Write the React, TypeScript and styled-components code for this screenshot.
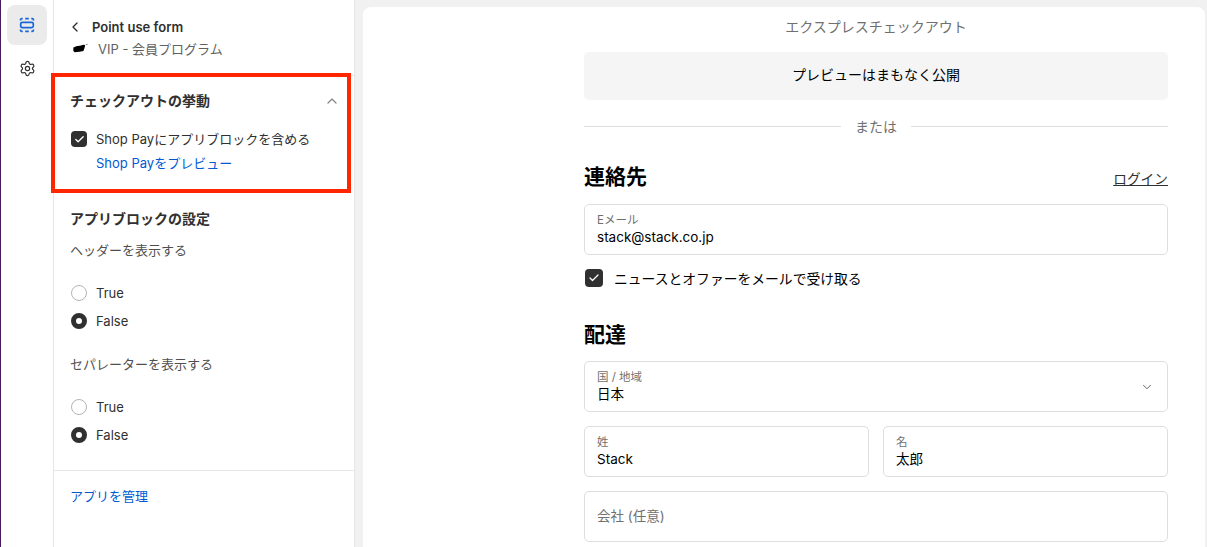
import React from 'react';
import styled, { createGlobalStyle } from 'styled-components';
import { ChevronDown, ChevronLeft, ChevronUp, Check, Settings } from 'lucide-react';

const GlobalStyle = createGlobalStyle`
  html, body {
    margin: 0;
    padding: 0;
    height: 100%;
    overflow: hidden;
    background: #f1f1f1;
    font-family: Inter, "Noto Sans CJK JP", sans-serif;
  }
  * {
    box-sizing: border-box;
  }
`;

const App: React.FC = () => {
  return (
    <>
      <GlobalStyle />
      <Page>
        <Rail>
          <RailButton active>
            <svg width="16" height="16" viewBox="0 0 16 16" fill="none" stroke="#1a66d9" strokeWidth="1.7">
              <rect x="1.7" y="5.4" width="12.6" height="5.2" rx="1.6" />
              <path d="M1.5 3.4V2.8a1.3 1.3 0 0 1 1.3-1.2h.9M6.2 1.6h3.6M12.3 1.6h.9a1.3 1.3 0 0 1 1.3 1.2v.6" />
              <path d="M1.5 12.6v.6a1.3 1.3 0 0 0 1.3 1.2h.9M6.2 14.4h3.6M12.3 14.4h.9a1.3 1.3 0 0 0 1.3-1.2v-.6" />
            </svg>
          </RailButton>
          <RailButton>
            <Settings size={17} color="#303030" strokeWidth={1.7} />
          </RailButton>
        </Rail>

        <Sidebar>
          <SidebarHeader>
            <TitleRow>
              <BackIcon>
                <ChevronLeft size={16} color="#303030" strokeWidth={2} />
              </BackIcon>
              <Title>Point use form</Title>
            </TitleRow>
            <SubRow>
              <svg width="15" height="10" viewBox="0 0 15 10">
                <path d="M0.4 4.4 4 3 7 2.8l3.4-1 1.8.3-.6 2.6-1.2 3.2-4 .9L1.6 9.2.3 7.8z" fill="#000" />
                <path d="M12.6 1.8 14.6.8l-.4 1z" fill="#000" />
              </svg>
              <SubText>VIP - 会員プログラム</SubText>
            </SubRow>
          </SidebarHeader>

          <BehaviorSection>
            <SectionHead>
              <SectionTitle>チェックアウトの挙動</SectionTitle>
              <CollapseIcon>
                <ChevronUp size={16} color="#8a8a8a" strokeWidth={2} />
              </CollapseIcon>
            </SectionHead>
            <CheckRow>
              <CheckBox size={16} radius={4}>
                <Check size={11} color="#fff" strokeWidth={3} />
              </CheckBox>
              <FieldText>Shop Payにアプリブロックを含める</FieldText>
            </CheckRow>
            <PreviewLink>Shop Payをプレビュー</PreviewLink>
          </BehaviorSection>

          <SettingsSection>
            <SectionTitle>アプリブロックの設定</SectionTitle>
            <RadioGroup label="ヘッダーを表示する" />
            <RadioGroup label="セパレーターを表示する" />
          </SettingsSection>

          <SidebarFooter>
            <ManageLink>アプリを管理</ManageLink>
          </SidebarFooter>

          <Highlight />
        </Sidebar>

        <Preview>
          <Checkout>
            <ExpressTitle>エクスプレスチェックアウト</ExpressTitle>
            <ComingSoon>プレビューはまもなく公開</ComingSoon>
            <Divider>または</Divider>

            <HeadingRow>
              <Heading>連絡先</Heading>
              <LoginLink>ログイン</LoginLink>
            </HeadingRow>
            <Field>
              <FieldLabel>Eメール</FieldLabel>
              <FieldValue>stack@stack.co.jp</FieldValue>
            </Field>
            <NewsRow>
              <CheckBox size={18} radius={4}>
                <Check size={12} color="#fff" strokeWidth={2.5} />
              </CheckBox>
              <NewsText>ニュースとオファーをメールで受け取る</NewsText>
            </NewsRow>

            <DeliveryHeading>配達</DeliveryHeading>
            <FieldStack>
              <Field>
                <FieldLabel>国 / 地域</FieldLabel>
                <FieldValue>日本</FieldValue>
                <SelectIcon>
                  <ChevronDown size={14} color="#555" strokeWidth={1.6} />
                </SelectIcon>
              </Field>
              <TwoColumns>
                <Field>
                  <FieldLabel>姓</FieldLabel>
                  <FieldValue>Stack</FieldValue>
                </Field>
                <Field>
                  <FieldLabel>名</FieldLabel>
                  <FieldValue>太郎</FieldValue>
                </Field>
              </TwoColumns>
              <Field>
                <Placeholder>会社 (任意)</Placeholder>
              </Field>
            </FieldStack>
          </Checkout>
        </Preview>
      </Page>
    </>
  );
};

const RadioGroup: React.FC<{ label: string }> = ({ label }) => (
  <GroupWrap>
    <GroupLabel>{label}</GroupLabel>
    <RadioList>
      <RadioRow>
        <Radio />
        <FieldText>True</FieldText>
      </RadioRow>
      <RadioRow>
        <Radio checked />
        <FieldText>False</FieldText>
      </RadioRow>
    </RadioList>
  </GroupWrap>
);

const Page = styled.div`
  display: flex;
  width: 1207px;
  height: 547px;
  overflow: hidden;
  background: #f1f1f1;
  border-left: 1px solid #4a1b5c;
`;

const Rail = styled.div`
  width: 52px;
  flex-shrink: 0;
  display: flex;
  flex-direction: column;
  align-items: center;
  gap: 3px;
  padding: 5px 0 0 0;
  background: #fff;
`;

const RailButton = styled.div<{ active?: boolean }>`
  width: 40px;
  height: 40px;
  border-radius: 8px;
  display: flex;
  align-items: center;
  justify-content: center;
  background: ${props => (props.active ? '#ebebeb' : 'transparent')};
`;

const Sidebar = styled.div`
  position: relative;
  width: 302px;
  flex-shrink: 0;
  display: flex;
  flex-direction: column;
  background: #fff;
  border-left: 1px solid #e6e6e6;
  border-right: 1px solid #e6e6e6;
`;

const SidebarHeader = styled.div`
  height: 76px;
  padding: 18px 16px 0 16px;
  border-bottom: 1px solid #e6e6e6;
`;

const TitleRow = styled.div`
  display: flex;
  align-items: center;
  gap: 9px;
  height: 18px;
`;

const BackIcon = styled.div`
  display: flex;
  margin-left: -3px;
`;

const Title = styled.div`
  font-size: 13px;
  font-weight: 600;
  color: #303030;
`;

const SubRow = styled.div`
  display: flex;
  align-items: center;
  gap: 10px;
  height: 20px;
  margin-top: 2px;
  padding-left: 3px;
`;

const SubText = styled.div`
  font-size: 13px;
  color: #616161;
`;

const BehaviorSection = styled.div`
  height: 117px;
  padding: 15px 16px 0 16px;
`;

const SectionHead = styled.div`
  display: flex;
  align-items: center;
  justify-content: space-between;
  height: 20px;
`;

const CollapseIcon = styled.div`
  display: flex;
  margin-right: -2px;
`;

const SectionTitle = styled.div`
  font-size: 14px;
  font-weight: 600;
  line-height: 20px;
  color: #303030;
`;

const CheckRow = styled.div`
  display: flex;
  align-items: center;
  gap: 9px;
  margin-top: 18px;
  height: 20px;
  padding-left: 1px;
`;

const CheckBox = styled.div<{ size: number; radius: number }>`
  width: ${props => props.size}px;
  height: ${props => props.size}px;
  border-radius: ${props => props.radius}px;
  background: #303030;
  display: flex;
  align-items: center;
  justify-content: center;
  flex-shrink: 0;
`;

const FieldText = styled.div`
  font-size: 13px;
  line-height: 20px;
  color: #303030;
`;

const PreviewLink = styled.div`
  margin: 4px 0 0 26px;
  font-size: 13px;
  line-height: 20px;
  color: #005bd3;
`;

const Highlight = styled.div`
  position: absolute;
  left: -3px;
  top: 73px;
  width: 300px;
  height: 120px;
  border: 4px solid #ff2600;
  pointer-events: none;
`;

const SettingsSection = styled.div`
  flex: 1;
  padding: 16px 16px 0 16px;
`;

const GroupWrap = styled.div`
  margin-top: 13px;
  margin-bottom: 25px;
  & + & {
    margin-top: 0;
    margin-bottom: 0;
  }
`;

const GroupLabel = styled.div`
  font-size: 13px;
  line-height: 16px;
  color: #4f4f4f;
`;

const RadioList = styled.div`
  display: flex;
  flex-direction: column;
  gap: 8px;
  margin-top: 25px;
`;

const RadioRow = styled.div`
  display: flex;
  align-items: center;
  gap: 9px;
  height: 20px;
  padding-left: 1px;
`;

const Radio = styled.div<{ checked?: boolean }>`
  width: 16px;
  height: 16px;
  border-radius: 50%;
  flex-shrink: 0;
  background: #fff;
  border: ${props => (props.checked ? '5px solid #303030' : '1px solid #b5b5b5')};
`;

const SidebarFooter = styled.div`
  height: 77px;
  padding: 15px 16px;
  border-top: 1px solid #e6e6e6;
`;

const ManageLink = styled.div`
  font-size: 13px;
  line-height: 20px;
  color: #005bd3;
`;

const Preview = styled.div`
  width: 842px;
  height: 540px;
  margin: 7px 0 0 8px;
  flex-shrink: 0;
  background: #fff;
  border-radius: 8px 8px 0 0;
  overflow: hidden;
`;

const Checkout = styled.div`
  width: 584px;
  margin-left: 221px;
  color: #000;
`;

const ExpressTitle = styled.div`
  margin-top: 11px;
  font-size: 14px;
  line-height: 18px;
  text-align: center;
  color: #707070;
`;

const ComingSoon = styled.div`
  height: 48px;
  margin-top: 16px;
  padding-bottom: 4px;
  border-radius: 5px;
  background: #f5f5f5;
  display: flex;
  align-items: center;
  justify-content: center;
  font-size: 14px;
  color: #000;
`;

const Divider = styled.div`
  display: flex;
  align-items: center;
  gap: 14px;
  margin-top: 16px;
  height: 20px;
  font-size: 14px;
  color: #707070;

  &::before,
  &::after {
    content: '';
    flex: 1;
    height: 1px;
    background: #dedede;
  }
`;

const HeadingRow = styled.div`
  display: flex;
  align-items: center;
  justify-content: space-between;
  margin-top: 26px;
  height: 30px;
  margin-bottom: 12px;
`;

const Heading = styled.div`
  font-size: 21px;
  font-weight: 700;
  line-height: 30px;
`;

const LoginLink = styled.div`
  font-size: 13.7px;
  color: #303030;
  text-decoration: underline;
  margin-top: 1px;
`;

const Field = styled.div`
  position: relative;
  flex: 1;
  height: 51px;
  padding: 9px 12px 0 12px;
  border: 1px solid #dedede;
  border-radius: 5px;
  background: #fff;
`;

const FieldLabel = styled.div`
  font-size: 11.5px;
  line-height: 13px;
  color: #707070;
`;

const FieldValue = styled.div`
  font-size: 13.5px;
  line-height: 20px;
  color: #000;
`;

const Placeholder = styled.div`
  font-size: 13.5px;
  line-height: 31px;
  color: #707070;
`;

const SelectIcon = styled.div`
  position: absolute;
  right: 13px;
  top: 18px;
  display: flex;
`;

const NewsRow = styled.div`
  display: flex;
  align-items: center;
  gap: 11px;
  margin-top: 13px;
  height: 20px;
  padding-left: 1px;
`;

const NewsText = styled.div`
  font-size: 13.8px;
  color: #000;
`;

const DeliveryHeading = styled(Heading)`
  margin-top: 32px;
  margin-bottom: 11px;
`;

const FieldStack = styled.div`
  display: flex;
  flex-direction: column;
  gap: 14px;

  & > ${Field} {
    flex: none;
  }
`;

const TwoColumns = styled.div`
  display: flex;
  gap: 14px;
`;

export default App;
